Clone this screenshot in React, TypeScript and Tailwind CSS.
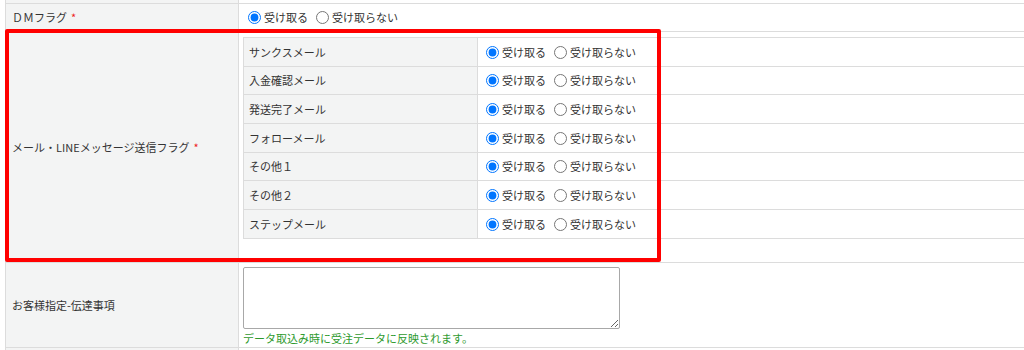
const font = { fontFamily: '"Noto Sans CJK JP", "Noto Sans", sans-serif' };

const mailTypes: { name: string; h: string }[] = [
  { name: "サンクスメール", h: "h-[29px]" },
  { name: "入金確認メール", h: "h-[28px]" },
  { name: "発送完了メール", h: "h-[29px]" },
  { name: "フォローメール", h: "h-[29px]" },
  { name: "その他１", h: "h-[28px]" },
  { name: "その他２", h: "h-[29px]" },
  { name: "ステップメール", h: "h-[29px]" },
];

function RadioPair({ name }: { name: string }) {
  return (
    <div className="flex items-center">
      <label className="flex items-center">
        <input type="radio" name={name} defaultChecked className="ml-[5px] mr-[3px] h-[13px] w-[13px]" />
        受け取る
      </label>
      <label className="ml-[3px] flex items-center">
        <input type="radio" name={name} className="ml-[5px] mr-[3px] h-[13px] w-[13px]" />
        受け取らない
      </label>
    </div>
  );
}

function Required() {
  return <span className="ml-[4px] text-[#ee2222]">*</span>;
}

export default function App() {
  return (
    <div
      className="relative h-[350px] w-[1024px] overflow-hidden bg-white text-[11px] text-[#333]"
      style={font}
    >
      <div className="ml-[5px] w-[1040px] border-l border-[#dcdcdc]">
        {/* tail of the row above */}
        <div className="grid h-[4px] grid-cols-[233px_1fr] border-b border-[#dcdcdc]">
          <div className="border-r border-[#dcdcdc] bg-[#f3f4f4]" />
          <div />
        </div>

        {/* DM flag */}
        <div className="grid h-[28px] grid-cols-[233px_1fr] border-b border-[#dcdcdc]">
          <div className="flex items-center border-r border-[#dcdcdc] bg-[#f3f4f4] pl-[6px]">
            ＤＭフラグ
            <Required />
          </div>
          <div className="flex items-center pl-[4px]">
            <RadioPair name="dm" />
          </div>
        </div>

        {/* mail / LINE flags */}
        <div className="grid h-[231px] grid-cols-[233px_1fr] border-b border-[#dcdcdc]">
          <div className="flex items-center border-r border-[#dcdcdc] bg-[#f3f4f4] pl-[6px]">
            メール・LINEメッセージ送信フラグ
            <Required />
          </div>
          <div className="pl-[4px] pt-[5px]">
            <div className="border-t border-l border-[#dcdcdc]">
              {mailTypes.map((m, i) => (
                <div
                  key={m.name}
                  className={`grid grid-cols-[234px_1fr] border-b border-[#dcdcdc] ${m.h}`}
                >
                  <div className="flex items-center border-r border-[#dcdcdc] bg-[#f3f4f4] pl-[5px]">
                    {m.name}
                  </div>
                  <div className="flex items-center pl-[3px]">
                    <RadioPair name={`mail-${i}`} />
                  </div>
                </div>
              ))}
            </div>
          </div>
        </div>

        {/* customer notes */}
        <div className="grid h-[85px] grid-cols-[233px_1fr] border-b border-[#dcdcdc]">
          <div className="flex items-center border-r border-[#dcdcdc] bg-[#f3f4f4] pl-[6px]">
            お客様指定-伝達事項
          </div>
          <div className="pl-[4px] pt-[4px]">
            <textarea className="block h-[62px] w-[377px] rounded-[2px] border border-[#a8a8a8] bg-white" />
            <div className="mt-[1px] text-[#2e9a2e]">データ取込み時に受注データに反映されます。</div>
          </div>
        </div>

        <div className="grid h-[10px] grid-cols-[233px_1fr]">
          <div className="border-r border-[#dcdcdc] bg-[#f3f4f4]" />
          <div />
        </div>
      </div>

      {/* annotation frame */}
      <div className="absolute left-[5px] top-[29px] h-[233px] w-[656px] rounded-[2px] border-4 border-[#ff0000]" />
    </div>
  );
}
